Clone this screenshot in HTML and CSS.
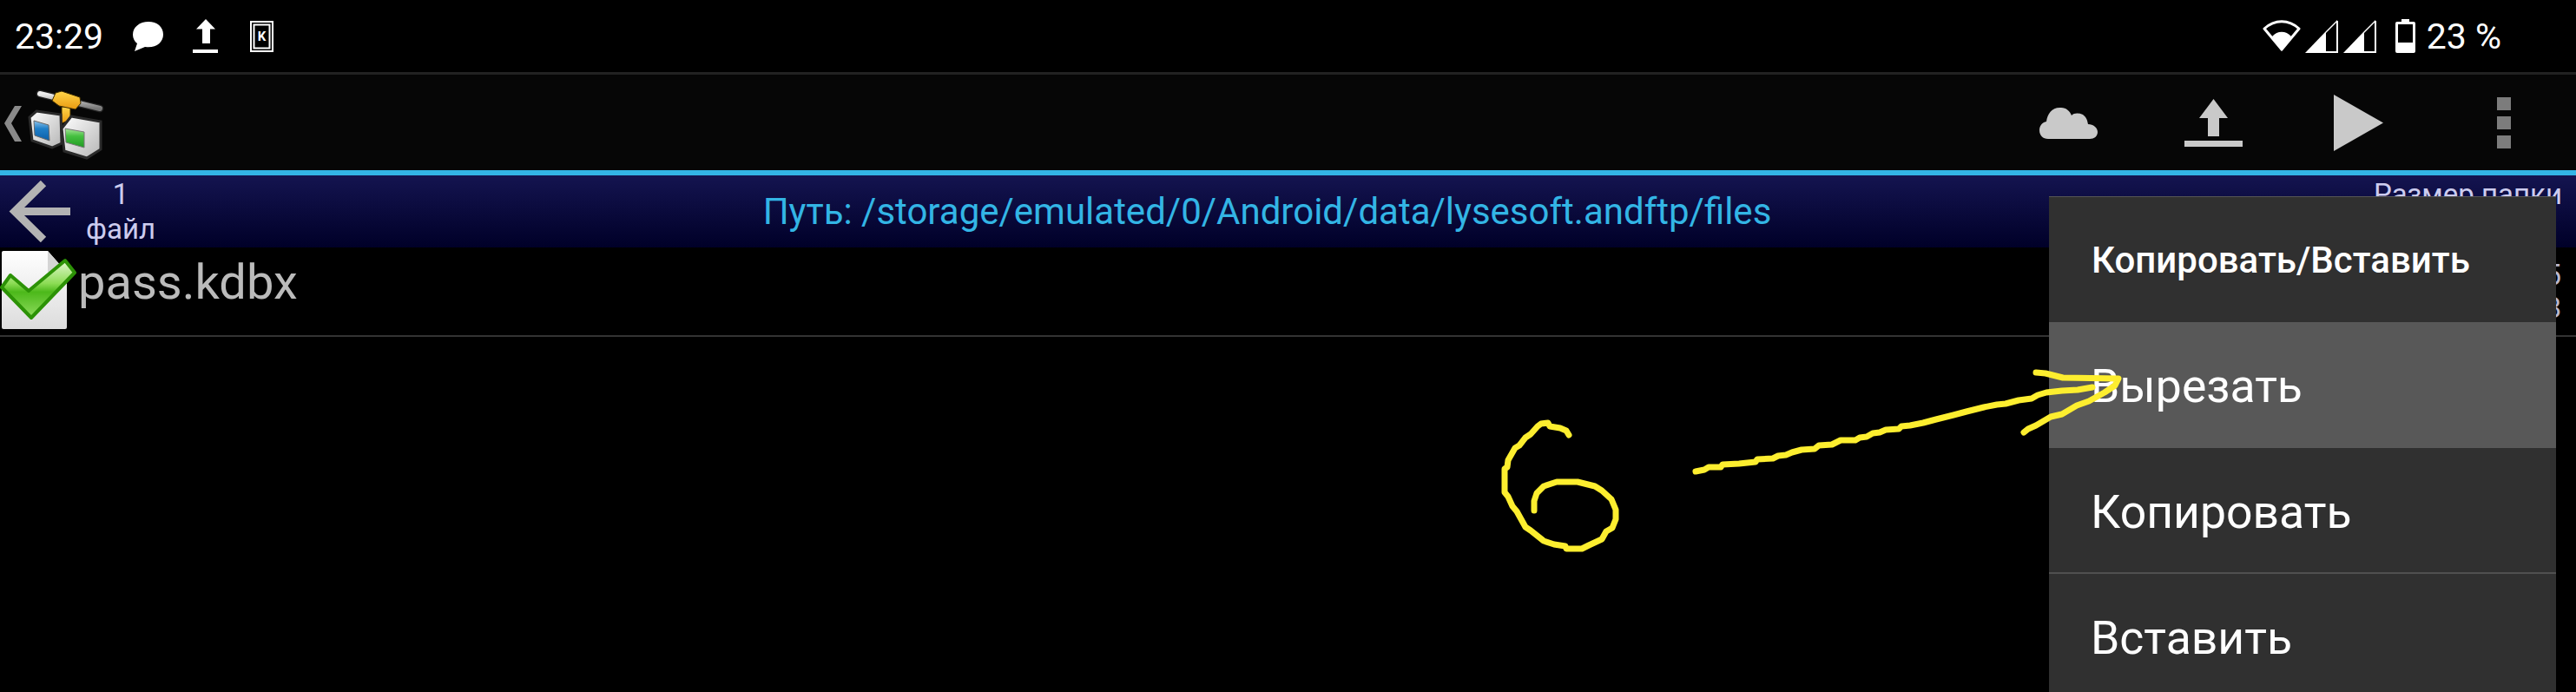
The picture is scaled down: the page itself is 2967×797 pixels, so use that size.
FILE: index.html
```html
<!DOCTYPE html>
<html lang="ru">
<head>
    <meta charset="UTF-8">
    <title>AndFTP</title>
    <link rel="stylesheet" href="styles.css">
</head>
<body>
    <div class="screen">
        <div class="status-bar">
            <div class="status-left">
                <span class="clock">23:29</span>
                <svg class="ic-chat" viewBox="0 0 35 34"><path fill="#fff" d="M18 0C8 0 0 6 0 15c0 4 2 8 5 10L2 34l12-5c1 .2 3 .2 4 .2 10 0 17-6 17-14.500C35 6 28 0 18 0z"/></svg>
                <svg class="ic-up" viewBox="0 0 32 39"><path fill="#fff" d="M15 0 26 11.500H20V28H11V11.500H4zM0 35H29V39H0z"/></svg>
                <svg class="ic-k" viewBox="0 0 27 36"><path fill="none" stroke="#fff" stroke-width="2" d="M1 1H26V35H1z"/><path fill="none" stroke="#fff" stroke-width="2" d="M4.500 4.500H22.500V31.500H4.500z"/><text x="13.500" y="23" class="k-letter">K</text></svg>
            </div>
            <div class="status-right">
                <svg class="ic-wifi" viewBox="0 0 44 37"><path fill="none" stroke="#fff" stroke-width="3" stroke-linejoin="round" d="M2 10C14-1 30-1 42 10L22 34z"/><path fill="#fff" d="M11 19C17 12 27 12 33 19L22 36z"/></svg>
                <svg class="ic-signal" viewBox="0 0 39 38"><path fill="#fff" d="M0 38 24 13V38z"/><path fill="none" stroke="#fff" stroke-width="2" d="M37 1V37H24"/><path fill="#fff" d="M24 13 37 0V2L24 15z"/></svg>
                <svg class="ic-signal" viewBox="0 0 39 38"><path fill="#fff" d="M0 38 24 13V38z"/><path fill="none" stroke="#fff" stroke-width="2" d="M37 1V37H24"/><path fill="#fff" d="M24 13 37 0V2L24 15z"/></svg>
                <svg class="ic-batt" viewBox="0 0 23 39"><path fill="#fff" d="M7 0H16V3H21Q23 3 23 5V37Q23 39 21 39H2Q0 39 0 37V5Q0 3 2 3H7z"/><path fill="#000" d="M3 6H20V27H3z"/></svg>
                <span class="battery-text">23 %</span>
            </div>
        </div>

        <div class="toolbar">
            <svg class="app-logo" viewBox="0 0 120 100">
                <defs>
                    <linearGradient id="pipe" x1="0" y1="0" x2="0" y2="1"><stop offset="0" stop-color="#eee"/><stop offset="1" stop-color="#777"/></linearGradient>
                    <linearGradient id="orange" x1="0" y1="0" x2="0" y2="1"><stop offset="0" stop-color="#ffd54a"/><stop offset="1" stop-color="#e89a10"/></linearGradient>
                    <linearGradient id="cube" x1="0" y1="0" x2="1" y2="1"><stop offset="0" stop-color="#fff"/><stop offset="1" stop-color="#b5b5b5"/></linearGradient>
                    <linearGradient id="blue" x1="0" y1="0" x2="0" y2="1"><stop offset="0" stop-color="#8fc4ea"/><stop offset=".4" stop-color="#1f7fc8"/><stop offset="1" stop-color="#0c5fa8"/></linearGradient>
                    <linearGradient id="green" x1="0" y1="0" x2="0" y2="1"><stop offset="0" stop-color="#a8e49a"/><stop offset=".4" stop-color="#45c040"/><stop offset="1" stop-color="#1f9a22"/></linearGradient>
                </defs>
                <path fill="#8a8a8a" d="M17 36H25L13 56 25 77H17L5 56z"/>
                <path stroke="#222" stroke-width="9" stroke-linecap="round" d="M46 22 115 39"/>
                <path stroke="url(#pipe)" stroke-width="6" stroke-linecap="round" d="M46 22 115 39"/>
                <path fill="url(#orange)" stroke="#3a2a00" stroke-width="1" d="M71 37H81V52L71 56z"/>
                <path fill="url(#orange)" stroke="#3a2a00" stroke-width="1" d="M64 21 71 19 92 26 93 33 87 40 68 36 60 30z"/>
                <path fill="url(#cube)" stroke="#2a2a2a" stroke-width="3" d="M42 42 70 46 71 79 60 84 37 76 34 49z"/>
                <path fill="url(#blue)" stroke="#666" d="M39 53 56 58 57 76 40 70z"/>
                <path fill="url(#cube)" stroke="#2a2a2a" stroke-width="3" d="M82 48 116 54 116 86 100 96 74 88 71 62z"/>
                <path fill="url(#green)" stroke="#777" d="M75 62 97 66 97 84 76 78z"/>
            </svg>
            <div class="actions">
                <button class="action"><svg class="ic-cloud" viewBox="0 0 67 37"><path fill="#c9c9c9" d="M10 37C4 37 0 33 0 27 0 22 3 18 8 17 9 8 15 0 25 1 31 1 35 5 37 10 40 7 45 7 50 9 54 12 55 15 56 20 62 20 67 24 67 29 67 34 63 37 58 37z"/></svg></button>
                <button class="action"><svg class="ic-send" viewBox="0 0 67 55"><path fill="#c9c9c9" d="M33.500 0 50 22H40V43H27V22H17zM0 48H67V55H0z"/></svg></button>
                <button class="action"><svg class="ic-play" viewBox="0 0 57 65"><path fill="#c9c9c9" d="M0 0 57 32.500 0 65z"/></svg></button>
                <button class="action"><span class="dots"><i></i><i></i><i></i></span></button>
            </div>
        </div>
        <div class="accent-line"></div>

        <div class="path-bar">
            <div class="path-left">
                <svg class="ic-back" viewBox="0 0 71 71"><path fill="none" stroke="#b3b3b3" stroke-width="9" d="M71 35.500H8M40 3 7 35.500 40 68"/></svg>
                <div class="file-count"><span>1</span><span>файл</span></div>
            </div>
            <div class="path-text">Путь: /storage/emulated/0/Android/data/lysesoft.andftp/files</div>
            <div class="folder-size">Размер папки</div>
        </div>

        <div class="file-row">
            <svg class="file-icon" viewBox="0 0 90 100">
                <defs>
                    <linearGradient id="page" x1="0" y1="0" x2="0" y2="1"><stop offset="0" stop-color="#fff"/><stop offset="1" stop-color="#dcdcdc"/></linearGradient>
                    <linearGradient id="tick" x1="0" y1="0" x2="0" y2="1"><stop offset="0" stop-color="#e4f8d2"/><stop offset=".4" stop-color="#8cdc55"/><stop offset=".55" stop-color="#4cb81a"/><stop offset="1" stop-color="#8fdc5e"/></linearGradient>
                </defs>
                <path fill="url(#page)" d="M4 3H55L77 28V91Q77 93 75 93H4Q2 93 2 91V5Q2 3 4 3z"/>
                <path fill="#d5d5d5" d="M55 3 77 28H57Q55 28 55 26z"/>
                <path fill="url(#tick)" stroke="#2c9206" stroke-width="4" stroke-linejoin="round" d="M2 45 12 31 33 49 75 14 86 28 36 80z"/>
            </svg>
            <span class="file-name">pass.kdbx</span>
            <div class="file-meta"><span>5</span><span>8</span></div>
        </div>

        <div class="menu">
            <div class="menu-title">Копировать/Вставить</div>
            <div class="menu-item selected">Вырезать</div>
            <div class="menu-item">Копировать</div>
            <div class="menu-item">Вставить</div>
        </div>

        <svg class="scribble" viewBox="0 0 2967 797">
            <polyline points="1807,501 1804,496 1797,493 1785,491 1783,487 1775,488 1771,491 1763,500 1757,504 1750,513 1745,516 1737,530 1736,538 1733,540 1733,567 1737,572 1742,583 1747,589 1757,607 1763,611 1778,623 1790,627 1803,629 1804,632 1822,632 1830,628 1845,621 1850,612 1857,608 1861,598 1861,587 1856,575 1845,565 1837,560 1817,555 1793,555 1778,560 1770,568 1767,577 1767,588"/>
            <polyline points="1953,543 1963,541 1968,538 1982,538 1984,535 2003,534 2022,532 2024,529 2042,528 2048,525 2057,524 2064,521 2075,518 2090,517 2095,513 2110,512 2120,507 2137,507 2142,504 2150,503 2157,499 2165,498 2172,495 2187,494 2190,491 2200,490 2215,487 2230,483 2250,478 2265,474 2285,469 2300,466 2310,465 2325,461 2340,459 2347,455 2357,452 2375,450 2393,449 2410,446"/>
            <polyline points="2345,429 2356,430 2376,435 2440,436 2436,444 2424,452 2406,462 2392,467 2375,477 2362,480 2345,490 2336,494 2331,498"/>
        </svg>
    </div>
</body>
</html>
```

FILE: styles.css
```css
html, body {
    margin: 0;
    background-color: #000;
}
.screen {
    position: relative;
    width: 2967px;
    height: 797px;
    overflow: hidden;
    font-family: 'Roboto', sans-serif;
    background-color: #000;
}

/* status bar */
.status-bar {
    display: flex;
    justify-content: space-between;
    align-items: center;
    height: 83px;
    color: #fff;
    font-size: 41px;
}
.status-left {
    display: flex;
    align-items: center;
    gap: 34px;
    padding-left: 17px;
}
.clock {
    width: 102px;
}
.ic-chat { width: 35px; height: 34px; }
.ic-up { width: 32px; height: 39px; }
.ic-k { width: 27px; height: 36px; }
.k-letter {
    font-size: 15px;
    font-weight: 700;
    font-family: 'Roboto', sans-serif;
    fill: #fff;
    text-anchor: middle;
}
.status-right {
    display: flex;
    align-items: center;
    gap: 5px;
    padding-right: 86px;
}
.ic-wifi { width: 44px; height: 37px; }
.ic-signal { width: 39px; height: 38px; }
.ic-batt { width: 23px; height: 39px; margin-left: 16px; }
.battery-text {
    margin-left: 8px;
}

/* toolbar */
.toolbar {
    display: flex;
    justify-content: space-between;
    align-items: flex-start;
    height: 110px;
    border-top: 3px solid #222;
    background-color: #060606;
}
.app-logo {
    width: 120px;
    height: 100px;
}
.actions {
    display: flex;
    height: 100%;
}
.action {
    display: flex;
    align-items: center;
    justify-content: center;
    width: 167px;
    padding: 0;
    border: 0;
    background: none;
}
.ic-cloud { width: 67px; height: 37px; }
.ic-send { width: 67px; height: 55px; }
.ic-play { width: 57px; height: 65px; }
.dots {
    display: flex;
    flex-direction: column;
    gap: 7px;
}
.dots i {
    display: block;
    width: 16px;
    height: 15px;
    background-color: #7c7c7c;
}
.accent-line {
    height: 6px;
    background-color: #33b5e5;
}

/* path header */
.path-bar {
    display: flex;
    align-items: stretch;
    height: 83px;
    background: linear-gradient(#141450, #000028);
}
.path-left {
    display: flex;
    align-items: center;
    width: 185px;
    padding-left: 10px;
    box-sizing: border-box;
}
.ic-back {
    width: 71px;
    height: 71px;
    flex: none;
}
.file-count {
    display: flex;
    flex-direction: column;
    align-items: center;
    width: 80px;
    margin-left: 18px;
    font-size: 33px;
    line-height: 40px;
    color: #ccccee;
}
.path-text {
    flex: 1;
    align-self: center;
    text-align: center;
    font-size: 42px;
    color: #33b5e5;
}
.folder-size {
    width: 233px;
    padding-top: 2px;
    font-size: 33px;
    color: #ccccee;
}

/* file list */
.file-row {
    display: flex;
    align-items: center;
    height: 101px;
    border-bottom: 2px solid #333;
}
.file-icon {
    width: 90px;
    height: 100px;
    flex: none;
}
.file-name {
    flex: 1;
    padding-bottom: 22px;
    font-size: 56px;
    color: #bbbbbb;
}
.file-meta {
    display: flex;
    flex-direction: column;
    align-items: flex-end;
    padding-right: 17px;
    font-size: 33px;
    line-height: 38px;
    color: #b8b8d0;
}

/* popup menu */
.menu {
    position: absolute;
    top: 226px;
    left: 2360px;
    width: 584px;
    height: 600px;
    border-top: 1px solid #555;
    background-color: #303030;
    color: #fff;
}
.menu-title {
    display: flex;
    align-items: center;
    height: 144px;
    padding-left: 49px;
    font-size: 42px;
    font-weight: 500;
}
.menu-item {
    display: flex;
    align-items: center;
    box-sizing: border-box;
    height: 145px;
    padding-left: 48px;
    padding-top: 4px;
    border-bottom: 2px solid #505050;
    font-size: 53.500px;
}
.menu-item.selected {
    background-color: #585858;
    border-bottom-color: #585858;
}

/* hand drawn marks on the screenshot */
.scribble {
    position: absolute;
    top: 0;
    left: 0;
    width: 2967px;
    height: 797px;
    pointer-events: none;
}
.scribble polyline {
    fill: none;
    stroke: #fdee2f;
    stroke-width: 7;
    stroke-linecap: round;
    stroke-linejoin: round;
}
```
